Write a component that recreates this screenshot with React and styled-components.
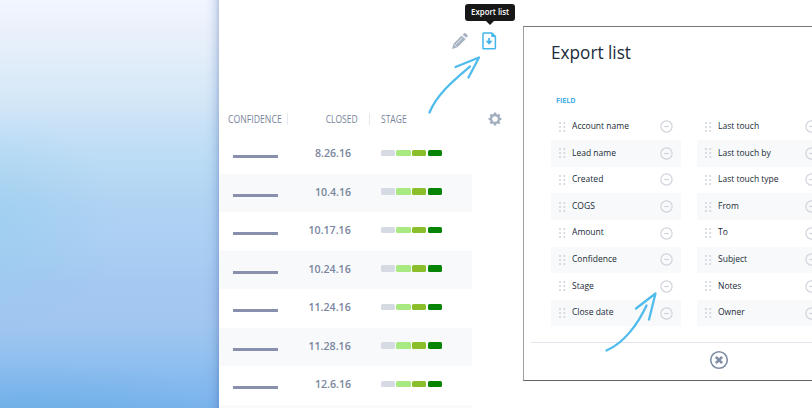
import React from "react";
import styled, { createGlobalStyle } from "styled-components";

const Global = createGlobalStyle`
  * { box-sizing: border-box; }
  body { margin: 0; background: #fff; overflow: hidden; font-family: "Open Sans", "Noto Sans", sans-serif; }
  svg { display: block; flex: none; }
`;

const Page = styled.main`
  position: relative;
  display: flex;
  width: 812px;
  height: 408px;
  overflow: hidden;
  background: #fff;
`;

const Sky = styled.aside`
  flex: 0 0 219px;
  background:
    linear-gradient(to left, rgba(65, 95, 165, 0.3), rgba(75, 110, 180, 0.14) 4px, rgba(80, 120, 190, 0.04) 9px, transparent 15px),
    radial-gradient(ellipse 130px 110px at -10px 225px, rgba(140, 203, 236, 0.42), rgba(140, 203, 236, 0.2) 50%, transparent),
    radial-gradient(ellipse 190px 55px at 30px 415px, rgba(96, 170, 226, 0.42), rgba(96, 170, 226, 0.18) 50%, transparent),
    linear-gradient(to bottom, #f1f6ff 0, #ebf1fb 30px, #e1edf9 62px, #d4e7f7 100px, #c6e0f7 130px, #badbf4 165px, #b0d3f3 205px, #abcff3 245px, #a4c8f1 285px, #a1c6f0 325px, #91c0ef 360px, #84b9ee 385px, #7ab3ec 408px);
`;

const ListPanel = styled.section`
  display: flex;
  flex: 0 0 304px;
  flex-direction: column;
`;

const Toolbar = styled.div`
  display: flex;
  flex: 0 0 103px;
  align-items: flex-start;
  padding: 32px 0 0 232px;
  gap: 14px;
`;

const HeaderRow = styled.div`
  display: flex;
  align-items: center;
  height: 32.3px;
  flex: none;
`;

const Condensed = styled.span`
  display: block;
  white-space: nowrap;
  transform: scaleX(${(p) => p.$fit || 0.9});
  transform-origin: ${(p) => p.$from || "left"} center;
`;

const HeadCell = styled.div`
  display: flex;
  justify-content: ${(p) => (p.$right ? "flex-end" : "flex-start")};
  width: ${(p) => p.$w}px;
  height: 12px;
  padding: 0 ${(p) => (p.$right ? 11.5 : 0)}px 0 ${(p) => (p.$right ? 0 : p.$pad)}px;
  border-right: ${(p) => (p.$last ? "none" : "1px solid #e3e9ec")};
  color: #78849b;
  font-size: 10px;
  font-weight: 500;
  line-height: 12px;
`;

const Row = styled.div`
  display: flex;
  align-items: center;
  flex: none;
  width: 253px;
  height: 38.5px;
  background: ${(p) => (p.$shaded ? "#f7f9fb" : "#fff")};
`;

const Confidence = styled.div`
  width: 45px;
  height: 3px;
  margin: 4px 0 0 14px;
  background: #8890ad;
`;

const DateText = styled.div`
  display: flex;
  justify-content: flex-end;
  width: 73px;
  margin-top: -3px;
  color: #7a859d;
  font-size: 11.5px;
  font-weight: 600;
  line-height: 16px;
`;

const Meter = styled.div`
  display: flex;
  gap: 1.5px;
  margin: -3px 0 0 29.7px;
`;

const Segment = styled.i`
  width: 14.2px;
  height: 6.6px;
  border-radius: 1.5px;
  background: ${(p) => p.$color};
`;

const Dialog = styled.section`
  display: flex;
  flex-direction: column;
  flex: 0 0 392px;
  height: 355px;
  margin-top: 26px;
  border: 1px solid #77797c;
  border-bottom-color: #606266;
  border-left-color: #9ba0a5;
  background: #fff;
`;

const Title = styled.h1`
  margin: 11px 0 0 26.7px;
  color: #202b3b;
  font-size: 18.8px;
  font-weight: 400;
  line-height: 28px;
`;

const FieldLabel = styled.div`
  height: 12px;
  margin: 27px 0 8.3px 32px;
  color: #45aee5;
  font-size: 7.7px;
  font-weight: 700;
  line-height: 14px;
`;

const Fields = styled.div`
  display: grid;
  grid-template-columns: 130px 130px;
  column-gap: 15.5px;
  margin-left: 27px;
`;

const FieldRow = styled.div`
  display: flex;
  align-items: center;
  height: 26.65px;
  padding: 0 8.3px 0 8px;
  background: ${(p) => (p.$shaded ? "#f7f9fa" : "#fff")};
`;

const FieldName = styled.div`
  flex: 1;
  margin: -1.5px 0 0 6.2px;
  color: #202935;
  font-size: 9.3px;
  font-weight: 500;
  line-height: 14px;
`;

const DialogFooter = styled.footer`
  display: flex;
  justify-content: center;
  margin: 15.2px 8px 0 7px;
  padding-top: 7px;
  border-top: 1px solid #e1e3ea;
`;

const Tooltip = styled.div`
  position: absolute;
  top: 4px;
  left: 465px;
  display: flex;
  justify-content: center;
  width: 50px;
  height: 17px;
  border-radius: 3px;
  background: #171717;
  color: #fff;
  font-size: 8.7px;
  font-weight: 600;
  line-height: 16px;
  &::after {
    content: "";
    position: absolute;
    top: 17px;
    left: 21px;
    border: 4px solid transparent;
    border-top-color: #171717;
    border-bottom: 0;
  }
`;

const HandDrawn = styled.svg`
  position: absolute;
  inset: 0;
  fill: none;
  stroke: #50bcec;
  stroke-width: 2.3;
  stroke-linecap: round;
  stroke-linejoin: round;
`;

const Pencil = () => (
  <svg width="17" height="18" viewBox="0 0 17 18" fill="#a7b3c2">
    <path d="M1 17 2.5 11.8 10.7 3.6 14.6 7.2 6.1 15.4Z" />
    <path d="M11.6 2.7 13 1.3Q14 .6 15 1.5L16.2 2.8Q17.2 3.8 16.2 4.8L15.3 5.8Z" />
    <path d="M3 12.5 5.7 15M4.8 12.4 11.5 5.8" stroke="#fff" strokeWidth=".7" fill="none" />
  </svg>
);

const ExportDoc = () => (
  <svg width="15" height="18" viewBox="0 0 15 18" fill="none" stroke="#43b5e9">
    <path d="M1.7 1H9.8L13.4 4.6V16.1Q13.4 16.8 12.7 16.8H1.7Q1 16.8 1 16.1V1.7Q1 1 1.7 1Z" strokeWidth="1.5" strokeLinejoin="round" />
    <path d="M9.8 1V4.6H13.4Z" fill="#43b5e9" strokeWidth=".9" />
    <path d="M7.1 6V10" strokeWidth="1.8" />
    <path d="M3.6 8.8H10.6L7.1 12.8Z" fill="#43b5e9" stroke="none" />
  </svg>
);

const TEETH = [0, 45, 90, 135, 180, 225, 270, 315];

const Gear = () => (
  <svg width="14" height="14" viewBox="-7 -7 14 14">
    {TEETH.map((a) => (
      <path key={a} d="M-1.6 -4-1.1 -6.4H1.1L1.6 -4Z" fill="#a1afbd" transform={`rotate(${a})`} />
    ))}
    <circle r="3.9" fill="#fff" stroke="#a1afbd" strokeWidth="2.1" />
  </svg>
);

const DOTS = [1, 5, 9];

const Grip = () => (
  <svg width="7" height="10" viewBox="0 0 7 10" fill="#ced3dc">
    {DOTS.map((y) => (
      <React.Fragment key={y}>
        <circle cx="1" cy={y} r="1" />
        <circle cx="5.3" cy={y} r="1" />
      </React.Fragment>
    ))}
  </svg>
);

const Remove = () => (
  <svg width="13" height="13" viewBox="0 0 13 13" fill="none" stroke="#d0d4dc" strokeWidth="1.2">
    <circle cx="6.5" cy="6.5" r="5.6" />
    <path d="M4.2 6.5H8.8" />
  </svg>
);

const Close = () => (
  <svg width="20" height="20" viewBox="0 0 20 20" fill="none" stroke="#7f8ca6">
    <circle cx="10" cy="10" r="8.3" strokeWidth="1.6" />
    <path d="M6.9 6.9 13.1 13.1M13.1 6.9 6.9 13.1" strokeWidth="2.6" />
  </svg>
);

const dates = ["8.26.16", "10.4.16", "10.17.16", "10.24.16", "11.24.16", "11.28.16", "12.6.16", ""];
const stageColors = ["#d6dae3", "#a8e981", "#8abf2b", "#078405"];
const fields = [
  ["Account name", "Last touch"],
  ["Lead name", "Last touch by"],
  ["Created", "Last touch type"],
  ["COGS", "From"],
  ["Amount", "To"],
  ["Confidence", "Subject"],
  ["Stage", "Notes"],
  ["Close date", "Owner"],
];

export default function App() {
  return (
    <Page>
      <Global />
      <Sky />
      <ListPanel>
        <Toolbar>
          <Pencil />
          <ExportDoc />
        </Toolbar>
        <HeaderRow>
          <HeadCell $w={69} $pad={9.3}><Condensed $fit={0.87}>CONFIDENCE</Condensed></HeadCell>
          <HeadCell $w={82} $right><Condensed $from="right" $fit={0.85}>CLOSED</Condensed></HeadCell>
          <HeadCell $w={118} $pad={10.5} $last><Condensed $fit={0.85}>STAGE</Condensed></HeadCell>
          <Gear />
        </HeaderRow>
        {dates.map((date, i) => (
          <Row key={i} $shaded={i % 2 === 1}>
            {date && (
              <>
                <Confidence />
                <DateText><Condensed $from="right" $fit={0.925}>{date}</Condensed></DateText>
                <Meter>
                  {stageColors.map((c) => <Segment key={c} $color={c} />)}
                </Meter>
              </>
            )}
          </Row>
        ))}
      </ListPanel>
      <Dialog>
        <Title><Condensed $fit={0.915}>Export list</Condensed></Title>
        <FieldLabel><Condensed $fit={0.93}>FIELD</Condensed></FieldLabel>
        <Fields>
          {fields.map((pair, i) =>
            pair.map((name) => (
              <FieldRow key={name} $shaded={i % 2 === 1}>
                <Grip />
                <FieldName><Condensed $fit={0.915}>{name}</Condensed></FieldName>
                <Remove />
              </FieldRow>
            ))
          )}
        </Fields>
        <DialogFooter><Close /></DialogFooter>
      </Dialog>
      <Tooltip><Condensed $from="center">Export list</Condensed></Tooltip>
      <HandDrawn width="812" height="408" viewBox="0 0 812 408">
        <path d="M429.5 112.5C437 94 454 80 470 66.5M455.5 67 479 57.5 468.5 77.5" />
        <path d="M606.5 350.5C624 343 638 324 646.5 305.5M636 308.5 655.5 293.5 649 319.5" />
      </HandDrawn>
    </Page>
  );
}
